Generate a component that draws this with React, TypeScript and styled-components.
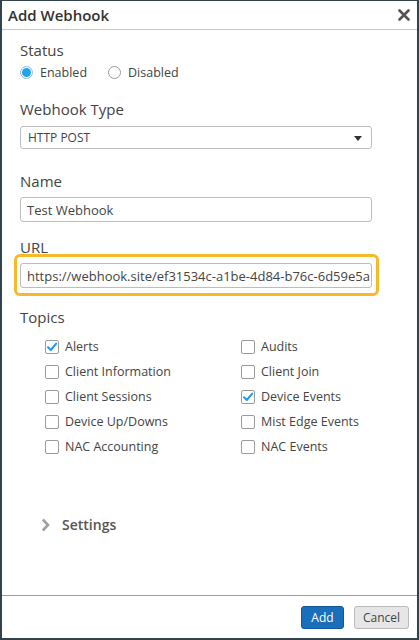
import { createGlobalStyle } from 'styled-components';
import styled from 'styled-components';

const GlobalStyle = createGlobalStyle`
  html, body {
    margin: 0;
    padding: 0;
    background: #33434d;
  }
  * {
    box-sizing: border-box;
  }
`;

const topicsLeft = [
  { label: 'Alerts', checked: true },
  { label: 'Client Information', checked: false },
  { label: 'Client Sessions', checked: false },
  { label: 'Device Up/Downs', checked: false },
  { label: 'NAC Accounting', checked: false },
];

const topicsRight = [
  { label: 'Audits', checked: false },
  { label: 'Client Join', checked: false },
  { label: 'Device Events', checked: true },
  { label: 'Mist Edge Events', checked: false },
  { label: 'NAC Events', checked: false },
];

const App = () => {
  // interleave the two columns so the grid fills row by row
  const topics = topicsLeft.flatMap((t, i) => [t, topicsRight[i]]);

  return (
    <>
      <GlobalStyle />
      <Frame>
        <Dialog>
          <Header>
            <Title>Add Webhook</Title>
            <CloseButton aria-label="Close">
              <svg width="12" height="12" viewBox="0 0 12 12">
                <path d="M1.5 1.5 L10.5 10.5 M10.5 1.5 L1.5 10.5" stroke="#555" strokeWidth="2.6" strokeLinecap="round" />
              </svg>
            </CloseButton>
          </Header>

          <Body>
            <Label>Status</Label>
            <RadioRow>
              <RadioOption>
                <Radio selected />
                Enabled
              </RadioOption>
              <RadioOption>
                <Radio selected={false} />
                Disabled
              </RadioOption>
            </RadioRow>

            <Label $top={18}>Webhook Type</Label>
            <Select>
              HTTP POST
              <Caret />
            </Select>

            <Label $top={22}>Name</Label>
            <Field>Test Webhook</Field>

            <Label $top={15}>URL</Label>
            <HighlightWrap>
              <Field>https://webhook.site/ef31534c-a1be-4d84-b76c-6d59e5a</Field>
              <Highlight />
            </HighlightWrap>

            <Label $top={19}>Topics</Label>
            <TopicGrid>
              {topics.map((t) => (
                <Topic key={t.label}>
                  <CheckBox>
                    {t.checked && (
                      <svg width="12" height="12" viewBox="0 0 12 12">
                        <path d="M2 6.3 L4.8 9 L10.2 2.6" fill="none" stroke="#2196f3" strokeWidth="2" strokeLinecap="round" strokeLinejoin="round" />
                      </svg>
                    )}
                  </CheckBox>
                  {t.label}
                </Topic>
              ))}
            </TopicGrid>

            <SettingsToggle>
              <svg width="9" height="14" viewBox="0 0 9 14">
                <path d="M1.8 1.5 L7 7 L1.8 12.5" fill="none" stroke="#a0a0a0" strokeWidth="2.6" />
              </svg>
              Settings
            </SettingsToggle>
          </Body>

          <Footer>
            <PrimaryButton>Add</PrimaryButton>
            <SecondaryButton>Cancel</SecondaryButton>
          </Footer>
        </Dialog>
      </Frame>
    </>
  );
};

const Frame = styled.div`
  height: 640px;
  padding: 1px 2px 2px 2px;
  font-family: 'Open Sans', 'Noto Sans', sans-serif;
  color: #444;
`;

const Dialog = styled.div`
  display: flex;
  flex-direction: column;
  height: 100%;
  background: #fff;
`;

const Header = styled.div`
  display: flex;
  align-items: center;
  justify-content: space-between;
  height: 29px;
  padding: 0 7px 0 6px;
  border-bottom: 1px solid #c8c8c8;
`;

const Title = styled.div`
  font-size: 15px;
  font-weight: 600;
  color: #333;
`;

const CloseButton = styled.div`
  display: flex;
  align-items: center;
  width: 12px;
  height: 12px;
`;

const Body = styled.div`
  flex: 1;
  display: flex;
  flex-direction: column;
  padding: 10px 0 0 18px;
`;

const Label = styled.div<{ $top?: number }>`
  margin-top: ${(p) => p.$top ?? 0}px;
  font-size: 15px;
  line-height: 20px;
  color: #444;
`;

const RadioRow = styled.div`
  display: flex;
  gap: 21px;
  margin-top: 3px;
  height: 18px;
`;

const RadioOption = styled.div`
  display: flex;
  align-items: center;
  gap: 7px;
  font-size: 12.5px;
  color: #444;
`;

const Radio = styled.span<{ selected: boolean }>`
  display: inline-flex;
  align-items: center;
  justify-content: center;
  width: 13px;
  height: 13px;
  border-radius: 50%;
  border: 1px solid ${(p) => (p.selected ? '#9fb8c8' : '#999')};
  background: #fff;

  &::after {
    content: '';
    display: ${(p) => (p.selected ? 'block' : 'none')};
    width: 9px;
    height: 9px;
    border-radius: 50%;
    background: #1ea5f2;
  }
`;

const Select = styled.div`
  position: relative;
  display: flex;
  align-items: center;
  width: 352px;
  height: 23px;
  margin-top: 7px;
  padding: 0 7px;
  border: 1px solid #bdbdbd;
  border-radius: 3px;
  font-size: 12px;
  color: #444;
`;

const Caret = styled.span`
  position: absolute;
  right: 9px;
  top: 9px;
  border-left: 4px solid transparent;
  border-right: 4px solid transparent;
  border-top: 5px solid #333;
`;

const Field = styled.div`
  display: flex;
  align-items: center;
  width: 352px;
  height: 25px;
  margin-top: 6px;
  padding: 0 6px;
  border: 1px solid #bdbdbd;
  border-radius: 3px;
  font-size: 13px;
  color: #444;
  white-space: nowrap;
  overflow: hidden;
`;

const HighlightWrap = styled.div`
  position: relative;
  width: 352px;
`;

const Highlight = styled.div`
  position: absolute;
  top: -3px;
  left: -6px;
  right: -7px;
  bottom: -8px;
  border: 3px solid #f7b928;
  border-radius: 6px;
  pointer-events: none;
`;

const TopicGrid = styled.div`
  display: grid;
  grid-template-columns: 196px 196px;
  grid-auto-rows: 25px;
  margin-top: 7px;
  padding-left: 25px;
`;

const Topic = styled.div`
  display: flex;
  align-items: center;
  gap: 6px;
  font-size: 12.5px;
  color: #444;
`;

const CheckBox = styled.span`
  display: inline-flex;
  align-items: center;
  justify-content: center;
  width: 14px;
  height: 14px;
  border: 1px solid #9a9a9a;
  border-radius: 2px;
  background: #fff;
`;

const SettingsToggle = styled.div`
  display: flex;
  align-items: center;
  gap: 12px;
  margin-top: 56px;
  padding-left: 21px;
  font-size: 14px;
  font-weight: 600;
  color: #555;
`;

const Footer = styled.div`
  display: flex;
  align-items: center;
  justify-content: flex-end;
  gap: 10px;
  height: 43px;
  padding-right: 8px;
  border-top: 1px solid #9e9e9e;
`;

const PrimaryButton = styled.div`
  display: flex;
  align-items: center;
  justify-content: center;
  width: 43px;
  height: 23px;
  border: 1px solid #14569a;
  border-radius: 3px;
  background: #1a6fba;
  font-size: 12px;
  color: #fff;
`;

const SecondaryButton = styled.div`
  display: flex;
  align-items: center;
  justify-content: center;
  width: 55px;
  height: 23px;
  border: 1px solid #bbb;
  border-radius: 3px;
  background: #e6e6e6;
  font-size: 12px;
  color: #444;
`;

export default App;
